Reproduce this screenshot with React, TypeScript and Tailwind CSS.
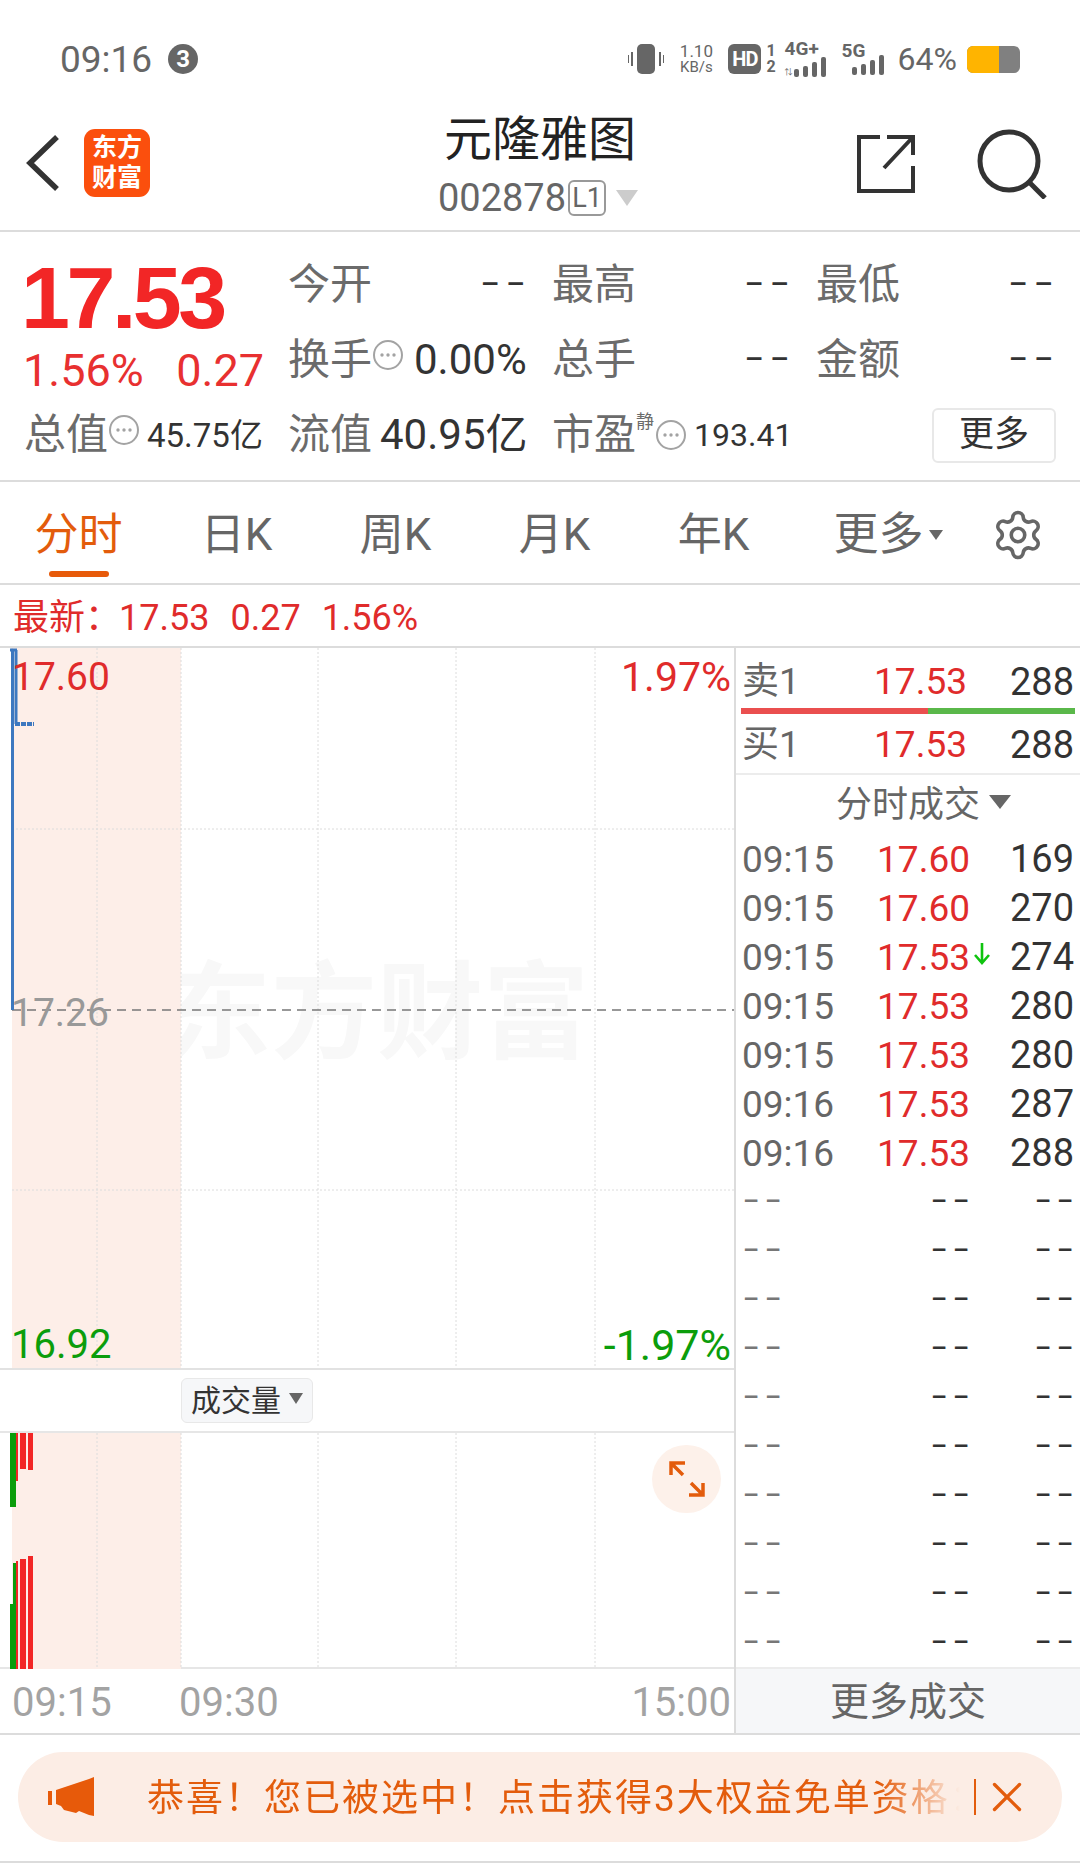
import React from 'react';
import { Settings, X } from 'lucide-react';

const TRADES = [
  ['09:15', '17.60', '169', false],
  ['09:15', '17.60', '270', false],
  ['09:15', '17.53', '274', true],
  ['09:15', '17.53', '280', false],
  ['09:15', '17.53', '280', false],
  ['09:16', '17.53', '287', false],
  ['09:16', '17.53', '288', false],
] as const;

function Dash({ className = '' }: { className?: string }) {
  return <span className={`text-[25px] font-medium leading-none tracking-[6px] ${className}`}>––</span>;
}

function InfoDot() {
  return (
    <svg width="32" height="32" viewBox="0 0 32 32" className="shrink-0">
      <circle cx="16" cy="16" r="14" fill="none" stroke="#a3a3a3" strokeWidth="2" />
      <circle cx="10" cy="16" r="1.7" fill="#a3a3a3" />
      <circle cx="16" cy="16" r="1.7" fill="#a3a3a3" />
      <circle cx="22" cy="16" r="1.7" fill="#a3a3a3" />
    </svg>
  );
}

function Stat({ label }: { label: string }) {
  return (
    <div className="flex w-[237px] shrink-0 items-center justify-between">
      <span className="text-[42px] leading-none text-[#6b6b6b]">{label}</span>
      <span className="mr-[-7px] text-[29px] font-medium leading-none tracking-[7px] text-[#333]">––</span>
    </div>
  );
}

function SignalBars() {
  return (
    <svg width="34" height="20" viewBox="0 0 34 20">
      <rect x="0" y="12" width="5" height="8" rx="2" fill="#666" />
      <rect x="9" y="9" width="5" height="11" rx="2" fill="#666" />
      <rect x="18" y="5" width="5" height="15" rx="2" fill="#666" />
      <rect x="27" y="0" width="5" height="20" rx="2" fill="#666" />
    </svg>
  );
}

function StatusBar() {
  return (
    <div className="flex h-[100px] items-center justify-between pl-[60px] pr-[60px] text-[#666]">
      <div className="flex items-center gap-[16px] pt-[18px]">
        <span className="text-[37px] leading-none">09:16</span>
        <span className="flex h-[30px] w-[30px] items-center justify-center rounded-full bg-[#666] text-[24px] font-bold leading-none text-white">3</span>
      </div>
      <div className="flex items-center pt-[18px]">
        <svg width="36" height="30" viewBox="0 0 36 30" className="mr-[14px]">
          <rect x="9" y="0" width="18" height="30" rx="5" fill="#666" />
          <path d="M4 8v14M0 11v8M32 8v14M36 11v8" stroke="#666" strokeWidth="2" />
        </svg>
        <div className="mr-[14px] flex w-[36px] flex-col items-center leading-none">
          <span className="text-[17px]">1.10</span>
          <span className="text-[15px]">KB/s</span>
        </div>
        <span className="flex h-[30px] w-[33px] items-center justify-center rounded-[6px] bg-[#666] text-[20px] font-bold leading-none tracking-[-1px] text-white">HD</span>
        <div className="ml-[5px] mr-[9px] flex flex-col items-center text-[16px] font-bold leading-[16px]">
          <span>1</span>
          <span>2</span>
        </div>
        <div className="mr-[14px] flex flex-col items-start">
          <span className="text-[19px] font-bold leading-[13px]">4G+</span>
          <div className="mt-[2px] flex items-end gap-[1px]">
            <span className="text-[8px] leading-[8px]">⇅</span>
            <SignalBars />
          </div>
        </div>
        <div className="mr-[12px] flex flex-col items-start">
          <span className="text-[19px] font-bold leading-[13px]">5G</span>
          <div className="mt-[-2px] ml-[10px]">
            <SignalBars />
          </div>
        </div>
        <span className="mr-[10px] text-[32px] leading-none">64%</span>
        <div className="flex h-[27px] w-[53px] overflow-hidden rounded-[6px] bg-[#808080]">
          <div className="h-full w-[32px] bg-[#ffb400]" />
        </div>
      </div>
    </div>
  );
}

function Header() {
  return (
    <div className="grid h-[132px] grid-cols-[1fr_auto_1fr] border-b-2 border-[#dcdcdc]">
      <div className="mt-[29px] flex h-[68px] items-center pl-[26px]">
        <svg width="34" height="56" viewBox="0 0 34 56" fill="none" stroke="#333" strokeWidth="5.5">
          <path d="M31 2 4 28l27 26" />
        </svg>
        <div className="ml-[24px] flex h-[68px] w-[66px] flex-col items-center justify-center rounded-[11px] bg-[#fb4f0d] text-[25px] font-bold leading-[30px] text-white">
          <span>东方</span>
          <span>财富</span>
        </div>
      </div>
      <div className="flex flex-col items-center pt-[10px]">
        <span className="text-[48px] leading-[60px] text-[#222]">元隆雅图</span>
        <div className="mr-[3px] flex items-center pt-[2px] text-[#666]">
          <span className="text-[38px] leading-[52px]">002878</span>
          <span className="ml-[2px] flex h-[36px] w-[38px] items-center justify-center rounded-[6px] border-2 border-[#999] text-[27px] leading-none">L1</span>
          <svg width="24" height="16" viewBox="0 0 24 16" className="ml-[9px]"><path d="M1 0h22L12 16z" fill="#ccc" /></svg>
        </div>
      </div>
      <div className="mt-[29px] flex h-[70px] items-center justify-end gap-[60px] pr-[33px]">
        <svg width="60" height="60" viewBox="0 0 60 60" fill="none" stroke="#333" strokeWidth="4">
          <path d="M23 3H2v54h54V32M30 3h26v18M56 3 27 34" />
        </svg>
        <svg width="70" height="70" viewBox="0 0 70 70" fill="none" stroke="#333" strokeWidth="5">
          <circle cx="32" cy="32" r="29" />
          <path d="M52 53 68 69" />
        </svg>
      </div>
    </div>
  );
}

function Quote() {
  return (
    <div className="grid h-[250px] grid-cols-[264px_1fr] grid-rows-3 border-b-2 border-[#dcdcdc] pb-[7px] pl-[24px] pt-[15px]">
      <div className="relative">
        <span className="absolute left-[-3px] top-[7px] font-['Liberation_Sans',sans-serif] text-[88px] font-bold leading-[88px] tracking-[-3.5px] text-[#f22626]">17.53</span>
      </div>
      <div className="flex items-center gap-[27px]">
        <Stat label="今开" />
        <Stat label="最高" />
        <Stat label="最低" />
      </div>
      <div className="flex items-center justify-between pr-[24px] pt-[22px] text-[45px] leading-none text-[#e83030]">
        <span className="ml-[-1px]">1.56%</span>
        <span>0.27</span>
      </div>
      <div className="flex items-center gap-[27px]">
        <div className="flex w-[237px] shrink-0 items-center">
          <span className="text-[42px] leading-none text-[#6b6b6b]">换手</span>
          <span className="mb-[10px]"><InfoDot /></span>
          <span className="ml-[10px] text-[42px] leading-none text-[#333]">0.00%</span>
        </div>
        <Stat label="总手" />
        <Stat label="金额" />
      </div>
      <div className="flex items-center">
        <span className="text-[42px] leading-none text-[#6b6b6b]">总值</span>
        <span className="mb-[10px]"><InfoDot /></span>
        <span className="ml-[7px] text-[33px] leading-none text-[#333]">45.75亿</span>
      </div>
      <div className="flex items-center gap-[27px]">
        <div className="flex w-[237px] shrink-0 items-center">
          <span className="text-[42px] leading-none text-[#6b6b6b]">流值</span>
          <span className="ml-[8px] text-[42px] leading-none text-[#333]">40.95亿</span>
        </div>
        <div className="flex items-center">
          <span className="text-[42px] leading-none text-[#6b6b6b]">市盈</span>
          <span className="mb-[26px] text-[18px] leading-none text-[#6b6b6b]">静</span>
          <span className="ml-[1px]"><InfoDot /></span>
          <span className="ml-[7px] text-[32px] leading-none text-[#333]">193.41</span>
        </div>
        <button className="ml-auto mr-[24px] flex h-[55px] w-[124px] items-center justify-center rounded-[6px] border-2 border-[#e8e8e8] text-[35px] text-[#333]">更多</button>
      </div>
    </div>
  );
}

function Tabs() {
  return (
    <div className="flex h-[103px] items-center border-b-2 border-[#dcdcdc] pt-[4px]">
      <div className="relative flex h-full w-[157px] items-center justify-center text-[44px] text-[#e35c0c]">
        分时
        <span className="absolute bottom-[6px] left-[49px] h-[6px] w-[60px] rounded-full bg-[#e75a0a]" />
      </div>
      {['日K', '周K', '月K', '年K'].map(t => (
        <div key={t} className="flex w-[159px] items-center justify-center text-[44px] text-[#666]">{t}</div>
      ))}
      <div className="flex w-[190px] items-center justify-center text-[45px] text-[#666]">
        更多
        <svg width="14" height="10" viewBox="0 0 14 10" className="ml-[5px]"><path d="M0 0h14L7 10z" fill="#666" /></svg>
      </div>
      <Settings size={54} strokeWidth={1.6} color="#666" className="ml-[8px]" />
    </div>
  );
}

function PriceChart() {
  return (
    <div className="relative h-[722px] shrink-0 overflow-hidden border-b-2 border-[#e2e2e2]">
      <span className="absolute left-[165px] top-[296px] font-['Noto_Sans_CJK_SC',sans-serif] text-[106px] font-bold leading-[120px] text-[#f8f8f8]">东方财富</span>
      <svg width="734" height="722" viewBox="0 0 734 722" className="absolute left-0 top-0">
        <rect x="12" y="0" width="169" height="722" fill="#fdeee8" />
        {[97, 181, 318, 456, 595].map(x => (
          <path key={x} d={`M${x} 0V722`} stroke="#dcdcdc" strokeDasharray="2 2" />
        ))}
        {[181, 542].map(y => (
          <path key={y} d={`M12 ${y}H734`} stroke="#dcdcdc" strokeDasharray="2 2" />
        ))}
        <path d="M12 362H734" stroke="#777" strokeWidth="1.5" strokeDasharray="9 6" />
        <path d="M12 0V362" stroke="#e4c9c4" />
        <path d="M12.5 2V362M16 2V76M10 2H17" stroke="#3d78c0" strokeWidth="3" fill="none" />
        <path d="M15 76H34" stroke="#3d78c0" strokeWidth="4" strokeDasharray="5 1" />
      </svg>
      <span className="absolute left-[12px] top-[4px] text-[39px] leading-[50px] text-[#e02b2b]">17.60</span>
      <span className="absolute right-[3px] top-[4px] text-[41px] leading-[50px] text-[#e02b2b]">1.97%</span>
      <span className="absolute left-[11px] top-[340px] text-[39px] leading-[50px] text-[#999]">17.26</span>
      <span className="absolute bottom-[-2px] left-[11px] text-[40px] leading-[50px] text-[#0b9d0b]">16.92</span>
      <span className="absolute bottom-[-2px] right-[3px] text-[43px] leading-[50px] text-[#0b9d0b]">-1.97%</span>
    </div>
  );
}

function VolumeChart() {
  return (
    <div className="relative h-[238px] shrink-0 border-b-2 border-t-2 border-[#e6e6e6]">
      <svg width="734" height="236" viewBox="0 0 734 236" className="absolute left-0 top-0">
        <rect x="12" y="0" width="169" height="236" fill="#fdeee8" />
        {[97, 181, 318, 456, 595].map(x => (
          <path key={x} d={`M${x} 0V236`} stroke="#dcdcdc" strokeDasharray="2 2" />
        ))}
        <rect x="10" y="0" width="6" height="74" fill="#0b9d0b" />
        <rect x="16" y="0" width="2" height="48" fill="#f22626" />
        <rect x="20" y="0" width="6" height="36" fill="#f22626" />
        <rect x="28" y="0" width="5" height="37" fill="#f22626" />
        <rect x="10" y="171" width="6" height="65" fill="#0b9d0b" />
        <rect x="13" y="130" width="3" height="41" fill="#0b9d0b" />
        <rect x="16" y="128" width="2" height="108" fill="#f22626" />
        <rect x="20" y="126" width="6" height="110" fill="#f22626" />
        <rect x="28" y="123" width="5" height="113" fill="#f22626" />
      </svg>
      <div className="absolute left-[652px] top-[12px] flex h-[68px] w-[69px] items-center justify-center rounded-full bg-[#fdf1ea]">
        <svg width="36" height="36" viewBox="0 0 36 36" fill="none" stroke="#e35c0c" strokeWidth="3.5">
          <path d="M2 14V2h14M2 2l12 12M34 22v12H20M34 34 22 22" />
        </svg>
      </div>
    </div>
  );
}

function BookRow({ label }: { label: string }) {
  return (
    <div className="grid h-full grid-cols-[1fr_107px] items-end px-[6px] text-[37px] leading-[52px]">
      <div className="flex justify-between">
        <span className="text-[#666]">{label}</span>
        <span className="text-[#e02b2b]">17.53</span>
      </div>
      <span className="text-right text-[38px] text-[#333]">288</span>
    </div>
  );
}

function TradePanel() {
  return (
    <div className="flex min-w-0 flex-1 flex-col border-l-2 border-[#dcdcdc]">
      <div className="h-[60px]"><BookRow label="卖1" /></div>
      <div className="mx-[5px] flex h-[6px]">
        <div className="w-[187px] bg-[#ea4f4f]" />
        <div className="flex-1 bg-[#5ab84a]" />
      </div>
      <div className="h-[57px]"><BookRow label="买1" /></div>
      <div className="mt-[2px] flex h-[54px] items-center border-t-2 border-[#ececec] pl-[100px] pt-[8px] text-[36px] text-[#666]">
        分时成交
        <svg width="22" height="14" viewBox="0 0 22 14" className="mb-[6px] ml-[9px]"><path d="M0 0h22L11 14z" fill="#666" /></svg>
      </div>
      <div className="flex flex-1 flex-col pt-[4px]">
        {TRADES.map(([time, price, qty, down], i) => (
          <div key={i} className="grid h-[49px] grid-cols-[112px_1fr_104px] items-center px-[6px] text-[37px]">
            <span className="text-[#666]">{time}</span>
            <span className="relative text-right text-[#e02b2b]">
              {price}
              {down && (
                <svg width="16" height="22" viewBox="0 0 16 22" fill="none" stroke="#0fc40f" strokeWidth="2.6" className="absolute right-[-20px] top-[13px]">
                  <path d="M8 0v20M1 12l7 8 7-8" />
                </svg>
              )}
            </span>
            <span className="text-right text-[38px] text-[#333]">{qty}</span>
          </div>
        ))}
        {Array.from({ length: 10 }).map((_, i) => (
          <div key={i} className="grid h-[49px] grid-cols-[112px_1fr_104px] items-center pl-[7px] pr-[1px] pt-[6px]">
            <Dash className="text-[#777]" />
            <Dash className="text-right text-[#333]" />
            <Dash className="text-right text-[#333]" />
          </div>
        ))}
      </div>
      <div className="flex h-[66px] items-center justify-center border-t-2 border-[#ececec] bg-[#f6f7f9] pt-[2px] text-[39px] text-[#666]">更多成交</div>
    </div>
  );
}

function AdBar() {
  return (
    <div className="border-y-2 border-[#dcdcdc] px-[18px] pb-[19px] pt-[17px]">
      <div className="flex h-[90px] items-center rounded-full bg-[#fcede5] pl-[30px] text-[#e35c0c]">
        <svg width="46" height="40" viewBox="0 0 46 40" className="shrink-0">
          <path d="M0 14h4v14H0zM8 13 41 2l5-2v39l-5-1-10-4-3 2-12-3-3-4-5-2z" fill="#e75a0a" />
        </svg>
        <div className="ml-[53px] w-[813px] overflow-hidden pt-[3px] text-[37px] tracking-[2px] [mask-image:linear-gradient(to_right,black_90%,transparent)]">
          恭喜！您已被选中！点击获得3大权益免单资格：
        </div>
        <span className="ml-[14px] h-[36px] w-[1.5px] bg-[#e35c0c]" />
        <X size={50} strokeWidth={1.6} className="ml-[6px]" />
      </div>
    </div>
  );
}

export default function App() {
  return (
    <div className="h-[1863px] w-[1080px] overflow-hidden whitespace-nowrap bg-white font-['Roboto','Noto_Sans_CJK_SC',sans-serif]">
      <StatusBar />
      <Header />
      <Quote />
      <Tabs />
      <div className="flex h-[63px] items-center border-b-2 border-[#dcdcdc] pl-[13px] pt-[4px] text-[36px] leading-none text-[#e02b2b]">
        <span>最新：</span>
        <span className="ml-[-2px]">17.53</span>
        <span className="ml-[21px]">0.27</span>
        <span className="ml-[21px]">1.56%</span>
      </div>
      <div className="flex h-[1085px]">
        <div className="flex w-[734px] shrink-0 flex-col">
          <PriceChart />
          <div className="flex h-[61px] shrink-0 items-center pl-[181px]">
            <div className="flex h-[45px] w-[132px] items-center justify-center rounded-[6px] border border-[#e8e8e8] bg-[#f6f7f9] text-[30px] text-[#333]">
              成交量
              <svg width="14" height="11" viewBox="0 0 14 11" className="mb-[4px] ml-[8px]"><path d="M0 0h14L7 11z" fill="#666" /></svg>
            </div>
          </div>
          <VolumeChart />
          <div className="flex min-h-0 flex-1 items-center pl-[12px] pr-[3px] pt-[3px] text-[40px] leading-none text-[#a3a3a3]">
            <span className="w-[167px]">09:15</span>
            <span>09:30</span>
            <span className="ml-auto">15:00</span>
          </div>
        </div>
        <TradePanel />
      </div>
      <AdBar />
    </div>
  );
}
